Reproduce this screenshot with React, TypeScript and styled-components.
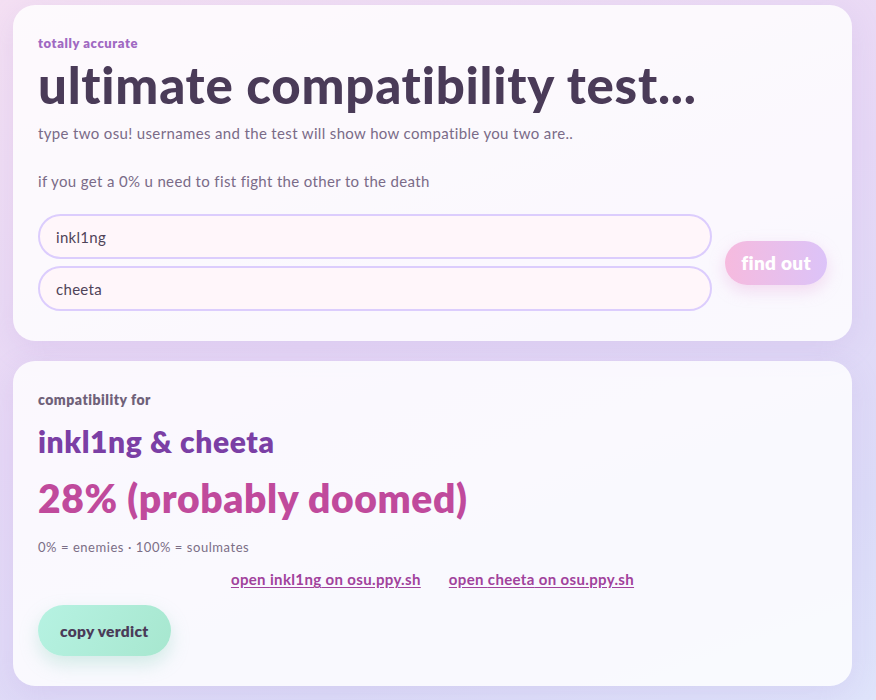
import React, {useState} from 'react';
import styled, {createGlobalStyle} from 'styled-components';

const GlobalStyle = createGlobalStyle`
  html, body {
    margin: 0;
    padding: 0;
  }
  body {
    min-height: 700px;
    background: linear-gradient(160deg, #f4e0f3 0%, #e6d8f6 45%, #dcdcf8 80%, #dfe4fb 100%);
    font-family: Lato, "Noto Sans", sans-serif;
    color: #4a3a55;
  }
`;

const Page = styled.div`
  display: flex;
  flex-direction: column;
  gap: 20px;
  padding: 5px 24px 14px 13px;
`;

const Card = styled.section`
  background: rgba(255, 255, 255, 0.82);
  border-radius: 22px;
  box-shadow: 0 8px 30px rgba(170, 130, 210, 0.16);
  padding: 25px 25px 30px 25px;
`;

const Eyebrow = styled.div`
  font-size: 13px;
  font-weight: 800;
  letter-spacing: 0.6px;
  color: #a069c2;
  line-height: 16px;
  margin-top: 5px;
`;

const Title = styled.h1`
  margin: 5px 0 7px 0;
  font-size: 51px;
  font-weight: 900;
  letter-spacing: 0.75px;
  line-height: 58px;
  color: #4a3b58;
`;

const Blurb = styled.p`
  margin: 0;
  font-size: 15px;
  letter-spacing: 0.35px;
  line-height: 24px;
  color: #7a6b88;
`;

const Form = styled.div`
  display: flex;
  align-items: center;
  gap: 13px;
  margin-top: 21px;
`;

const Inputs = styled.div`
  flex: 1;
  display: flex;
  flex-direction: column;
  gap: 7px;
`;

const NameInput = styled.input`
  height: 45px;
  box-sizing: border-box;
  border: 2px solid #dccdfd;
  border-radius: 999px;
  background: #fff6fa;
  padding: 0 16px;
  font-family: inherit;
  font-size: 15px;
  letter-spacing: 0.3px;
  color: #4f4358;
  outline: none;
`;

const PillButton = styled.button<{$tone: 'pink' | 'mint'}>`
  border: none;
  border-radius: 999px;
  font-family: inherit;
  font-weight: 800;
  cursor: pointer;
  background: ${p => p.$tone === 'pink'
    ? 'linear-gradient(90deg, #f6bade 0%, #dcc3f8 100%)'
    : 'linear-gradient(120deg, #b6f2e2 0%, #a7e7cf 100%)'};
  color: ${p => p.$tone === 'pink' ? '#ffffff' : '#4a3b58'};
  font-size: ${p => p.$tone === 'pink' ? '19px' : '15.5px'};
  letter-spacing: 0.3px;
  height: ${p => p.$tone === 'pink' ? '44px' : '51px'};
  padding: ${p => p.$tone === 'pink' ? '0 16px' : '0 22px'};
  box-shadow: ${p => p.$tone === 'pink'
    ? '0 6px 16px rgba(230, 160, 215, 0.35)'
    : '0 8px 18px rgba(140, 210, 190, 0.35)'};
`;

const Label = styled.div`
  font-size: 14px;
  font-weight: 800;
  letter-spacing: 0.5px;
  color: #6f6179;
  margin-top: 5px;
  line-height: 18px;
`;

const Pair = styled.h2`
  margin: 14px 0 0 0;
  font-size: 30px;
  font-weight: 800;
  letter-spacing: 0.6px;
  line-height: 36px;
  color: #7b3fa5;
`;

const Score = styled.div`
  margin-top: 15px;
  font-size: 39px;
  font-weight: 800;
  letter-spacing: 0.6px;
  line-height: 48px;
  color: #c04a9c;
`;

const Scale = styled.div`
  margin-top: 16px;
  font-size: 13px;
  letter-spacing: 0.55px;
  line-height: 18px;
  color: #7b6e86;
`;

const Links = styled.div`
  display: flex;
  justify-content: center;
  gap: 28px;
  margin-top: 14px;
`;

const ProfileLink = styled.a`
  font-size: 15px;
  font-weight: 700;
  letter-spacing: 0.35px;
  color: #a1429c;
  text-decoration: underline;
  text-underline-offset: 2px;
`;

const Actions = styled.div`
  margin-top: 17px;
  display: flex;
`;

export default function App() {
  const [a, setA] = useState('inkl1ng');
  const [b, setB] = useState('cheeta');

  return (
    <>
      <GlobalStyle />
      <Page>
        <Card>
          <Eyebrow>totally accurate</Eyebrow>
          <Title>ultimate compatibility test...</Title>
          <Blurb>
            type two osu! usernames and the test will show how compatible you two are..
            <br /><br />
            if you get a 0% u need to fist fight the other to the death
          </Blurb>
          <Form>
            <Inputs>
              <NameInput value={a} onChange={e => setA(e.target.value)} />
              <NameInput value={b} onChange={e => setB(e.target.value)} />
            </Inputs>
            <PillButton $tone="pink">find out</PillButton>
          </Form>
        </Card>
        <Card>
          <Label>compatibility for</Label>
          <Pair>{a} &amp; {b}</Pair>
          <Score>28% (probably doomed)</Score>
          <Scale>0% = enemies · 100% = soulmates</Scale>
          <Links>
            <ProfileLink href="#">open {a} on osu.ppy.sh</ProfileLink>
            <ProfileLink href="#">open {b} on osu.ppy.sh</ProfileLink>
          </Links>
          <Actions>
            <PillButton $tone="mint">copy verdict</PillButton>
          </Actions>
        </Card>
      </Page>
    </>
  );
}
